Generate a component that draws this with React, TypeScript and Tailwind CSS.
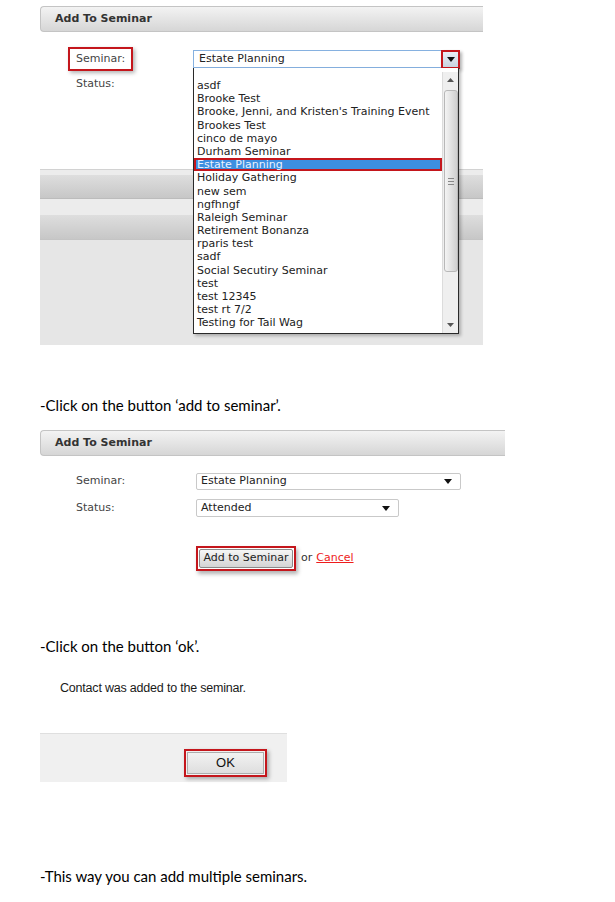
import React from 'react';

const ui = "font-['DejaVu_Sans',sans-serif]";
const doc = "font-['Lato','Liberation_Sans',sans-serif]";

const seminars = [
  'asdf',
  'Brooke Test',
  "Brooke, Jenni, and Kristen's Training Event",
  'Brookes Test',
  'cinco de mayo',
  'Durham Seminar',
  'Estate Planning',
  'Holiday Gathering',
  'new sem',
  'ngfhngf',
  'Raleigh Seminar',
  'Retirement Bonanza',
  'rparis test',
  'sadf',
  'Social Secutiry Seminar',
  'test',
  'test 12345',
  'test rt 7/2',
  'Testing for Tail Wag',
];

function Caret({ className = '' }: { className?: string }) {
  return (
    <svg width="8" height="5" viewBox="0 0 8 5" className={className}>
      <path d="M0 0h8L4 5z" fill="#111" />
    </svg>
  );
}

function HeaderBar({ title }: { title: string }) {
  return (
    <div className="h-[26px] flex items-center pl-[14px] rounded-l-[4px] border border-r-0 border-[#c4c4c4] bg-linear-to-b from-[#f3f3f3] to-[#d6d6d6]">
      <span className={`${ui} text-[11px] font-bold text-[#333]`}>{title}</span>
    </div>
  );
}

function DropdownList() {
  return (
    <div className="absolute left-[153px] top-[68px] w-[266px] h-[266px] bg-white border border-t-0 border-[#2a2a2a] shadow-[2px_2px_3px_rgba(0,0,0,0.25)] flex">
      <div className={`${ui} flex-1 pt-[11px] text-[11px] text-[#222]`}>
        {seminars.map((s) => {
          const active = s === 'Estate Planning';
          return (
            <div
              key={s}
              className={
                active
                  ? 'h-[13.2px] leading-[13.2px] pl-[3px] whitespace-nowrap bg-[#3d8fe0] text-[#eaf2ff] ring-2 ring-inset ring-[#c4161c]'
                  : 'h-[13.2px] leading-[13.2px] pl-[3px] whitespace-nowrap'
              }
            >
              {s}
            </div>
          );
        })}
      </div>
      <div className="w-[16px] mt-[4px] bg-[#efefef] border-l border-[#dcdcdc] flex flex-col items-center">
        <div className="h-[16px] flex items-center justify-center">
          <svg width="7" height="4" viewBox="0 0 7 4">
            <path d="M0 4h7L3.5 0z" fill="#555" />
          </svg>
        </div>
        <div className="w-[14px] h-[182px] mt-[2px] rounded-[3px] border border-[#b8b8b8] bg-linear-to-r from-[#f4f4f4] via-[#e2e2e2] to-[#cfcfcf] flex items-center justify-center">
          <div className="flex flex-col gap-[2px]">
            <div className="w-[6px] h-px bg-[#888]" />
            <div className="w-[6px] h-px bg-[#888]" />
            <div className="w-[6px] h-px bg-[#888]" />
          </div>
        </div>
        <div className="flex-1" />
        <div className="h-[16px] flex items-center justify-center">
          <svg width="7" height="4" viewBox="0 0 7 4">
            <path d="M0 0h7L3.5 4z" fill="#555" />
          </svg>
        </div>
      </div>
    </div>
  );
}

function OpenSelectShot() {
  return (
    <div className="ml-[40px] w-[443px] h-[345px] relative flex flex-col">
      <div className="mt-[6px]">
        <HeaderBar title="Add To Seminar" />
      </div>
      <div className="h-[137px] pt-[18px] bg-white">
        <div className="flex items-center h-[18px]">
          <div className="w-[153px] pl-[28px]">
            <div className="w-[65px] h-[24px] border-2 border-[#c4161c] pl-[6px] flex items-center shadow-[2px_2px_4px_rgba(0,0,0,0.3)]">
              <span className={`${ui} text-[11px] text-[#444]`}>Seminar:</span>
            </div>
          </div>
          <div className="w-[266px] h-[18px] border border-[#86b1e0] bg-white flex items-center">
            <span className={`${ui} flex-1 pl-[5px] text-[11px] text-[#222]`}>Estate Planning</span>
            <div className="w-[19px] h-[19px] -mr-[2px] border-2 border-[#c4161c] shadow-[2px_2px_3px_rgba(0,0,0,0.3)] bg-linear-to-b from-[#e9eef5] to-[#c9d3df] flex items-center justify-center">
              <Caret />
            </div>
          </div>
        </div>
        <div className="mt-[7px] h-[18px] flex items-center pl-[36px]">
          <span className={`${ui} text-[11px] text-[#444]`}>Status:</span>
        </div>
      </div>
      <div className="h-px bg-[#d2d2d2]" />
      <div className="h-[5px] bg-[#ececec]" />
      <div className="h-[24px] bg-linear-to-b from-[#dedede] to-[#c7c7c7] border-b border-[#bcbcbc]" />
      <div className="h-[16px] bg-[#ececec]" />
      <div className="h-[25px] bg-linear-to-b from-[#dedede] to-[#c7c7c7] border-b border-[#c4c4c4]" />
      <div className="flex-1 bg-[#e6e6e6]" />
      <DropdownList />
    </div>
  );
}

function FilledFormShot() {
  return (
    <div className="mt-[15px] ml-[40px] w-[465px] h-[150px] flex flex-col">
      <HeaderBar title="Add To Seminar" />
      <div className="pt-[17px]">
        <div className="flex items-center h-[17px]">
          <span className={`${ui} w-[156px] pl-[36px] text-[11px] text-[#444]`}>Seminar:</span>
          <div className="w-[265px] h-[17px] rounded-[2px] border border-[#c9c9c9] bg-white flex items-center pl-[4px] pr-[8px]">
            <span className={`${ui} flex-1 text-[11px] text-[#222]`}>Estate Planning</span>
            <Caret />
          </div>
        </div>
        <div className="mt-[9px] flex items-center h-[18px]">
          <span className={`${ui} w-[156px] pl-[36px] text-[11px] text-[#444]`}>Status:</span>
          <div className="w-[203px] h-[18px] rounded-[2px] border border-[#c9c9c9] bg-white flex items-center pl-[4px] pr-[8px]">
            <span className={`${ui} flex-1 text-[11px] text-[#222]`}>Attended</span>
            <Caret />
          </div>
        </div>
        <div className="mt-[29px] ml-[156px] flex items-center">
          <div className="w-[100px] h-[25px] border-2 border-[#c4161c] p-px shadow-[2px_3px_4px_rgba(0,0,0,0.3)]">
            <div className={`${ui} h-full rounded-[2px] border border-[#8a8a8a] bg-linear-to-b from-[#f6f6f6] to-[#d4d4d4] flex items-center justify-center text-[11px] text-[#222]`}>
              Add to Seminar
            </div>
          </div>
          <span className={`${ui} ml-[5px] text-[11px] text-[#333]`}>or</span>
          <span className={`${ui} ml-[4px] text-[11px] text-[#ee1c1c] underline`}>Cancel</span>
        </div>
      </div>
    </div>
  );
}

function ConfirmShot() {
  return (
    <div className="ml-[40px] w-[247px]">
      <div className="mt-[22px] h-[20px] flex items-center pl-[20px]">
        <span className="font-['Liberation_Sans',Arial,sans-serif] text-[12.5px] tracking-[-0.2px] text-[#1a1a1a]">
          Contact was added to the seminar.
        </span>
      </div>
      <div className="mt-[35px] h-[49px] bg-[#f0f0f0] border-t border-[#dfdfdf] flex justify-end pr-[20px] pt-[15px]">
        <div className="w-[83px] h-[28px] border-2 border-[#c4161c] shadow-[2px_2px_4px_rgba(0,0,0,0.3)] p-px">
          <div className="h-full border border-[#adadad] bg-linear-to-b from-[#f2f2f2] to-[#dedede] flex items-center justify-center font-['Liberation_Sans',Arial,sans-serif] text-[13px] text-[#111]">
            OK
          </div>
        </div>
      </div>
    </div>
  );
}

export default function App() {
  return (
    <div className="w-[615px] min-h-[902px] bg-white flex flex-col">
      <OpenSelectShot />
      <p className={`${doc} mt-[50px] ml-[40px] h-[20px] leading-[20px] text-[15px] text-black`}>
        -Click on the button ‘add to seminar’.
      </p>
      <FilledFormShot />
      <p className={`${doc} mt-[56px] ml-[40px] h-[20px] leading-[20px] text-[15px] text-black`}>
        -Click on the button ‘ok’.
      </p>
      <ConfirmShot />
      <p className={`${doc} mt-[84px] ml-[40px] h-[20px] leading-[20px] text-[15px] text-black`}>
        -This way you can add multiple seminars.
      </p>
    </div>
  );
}
